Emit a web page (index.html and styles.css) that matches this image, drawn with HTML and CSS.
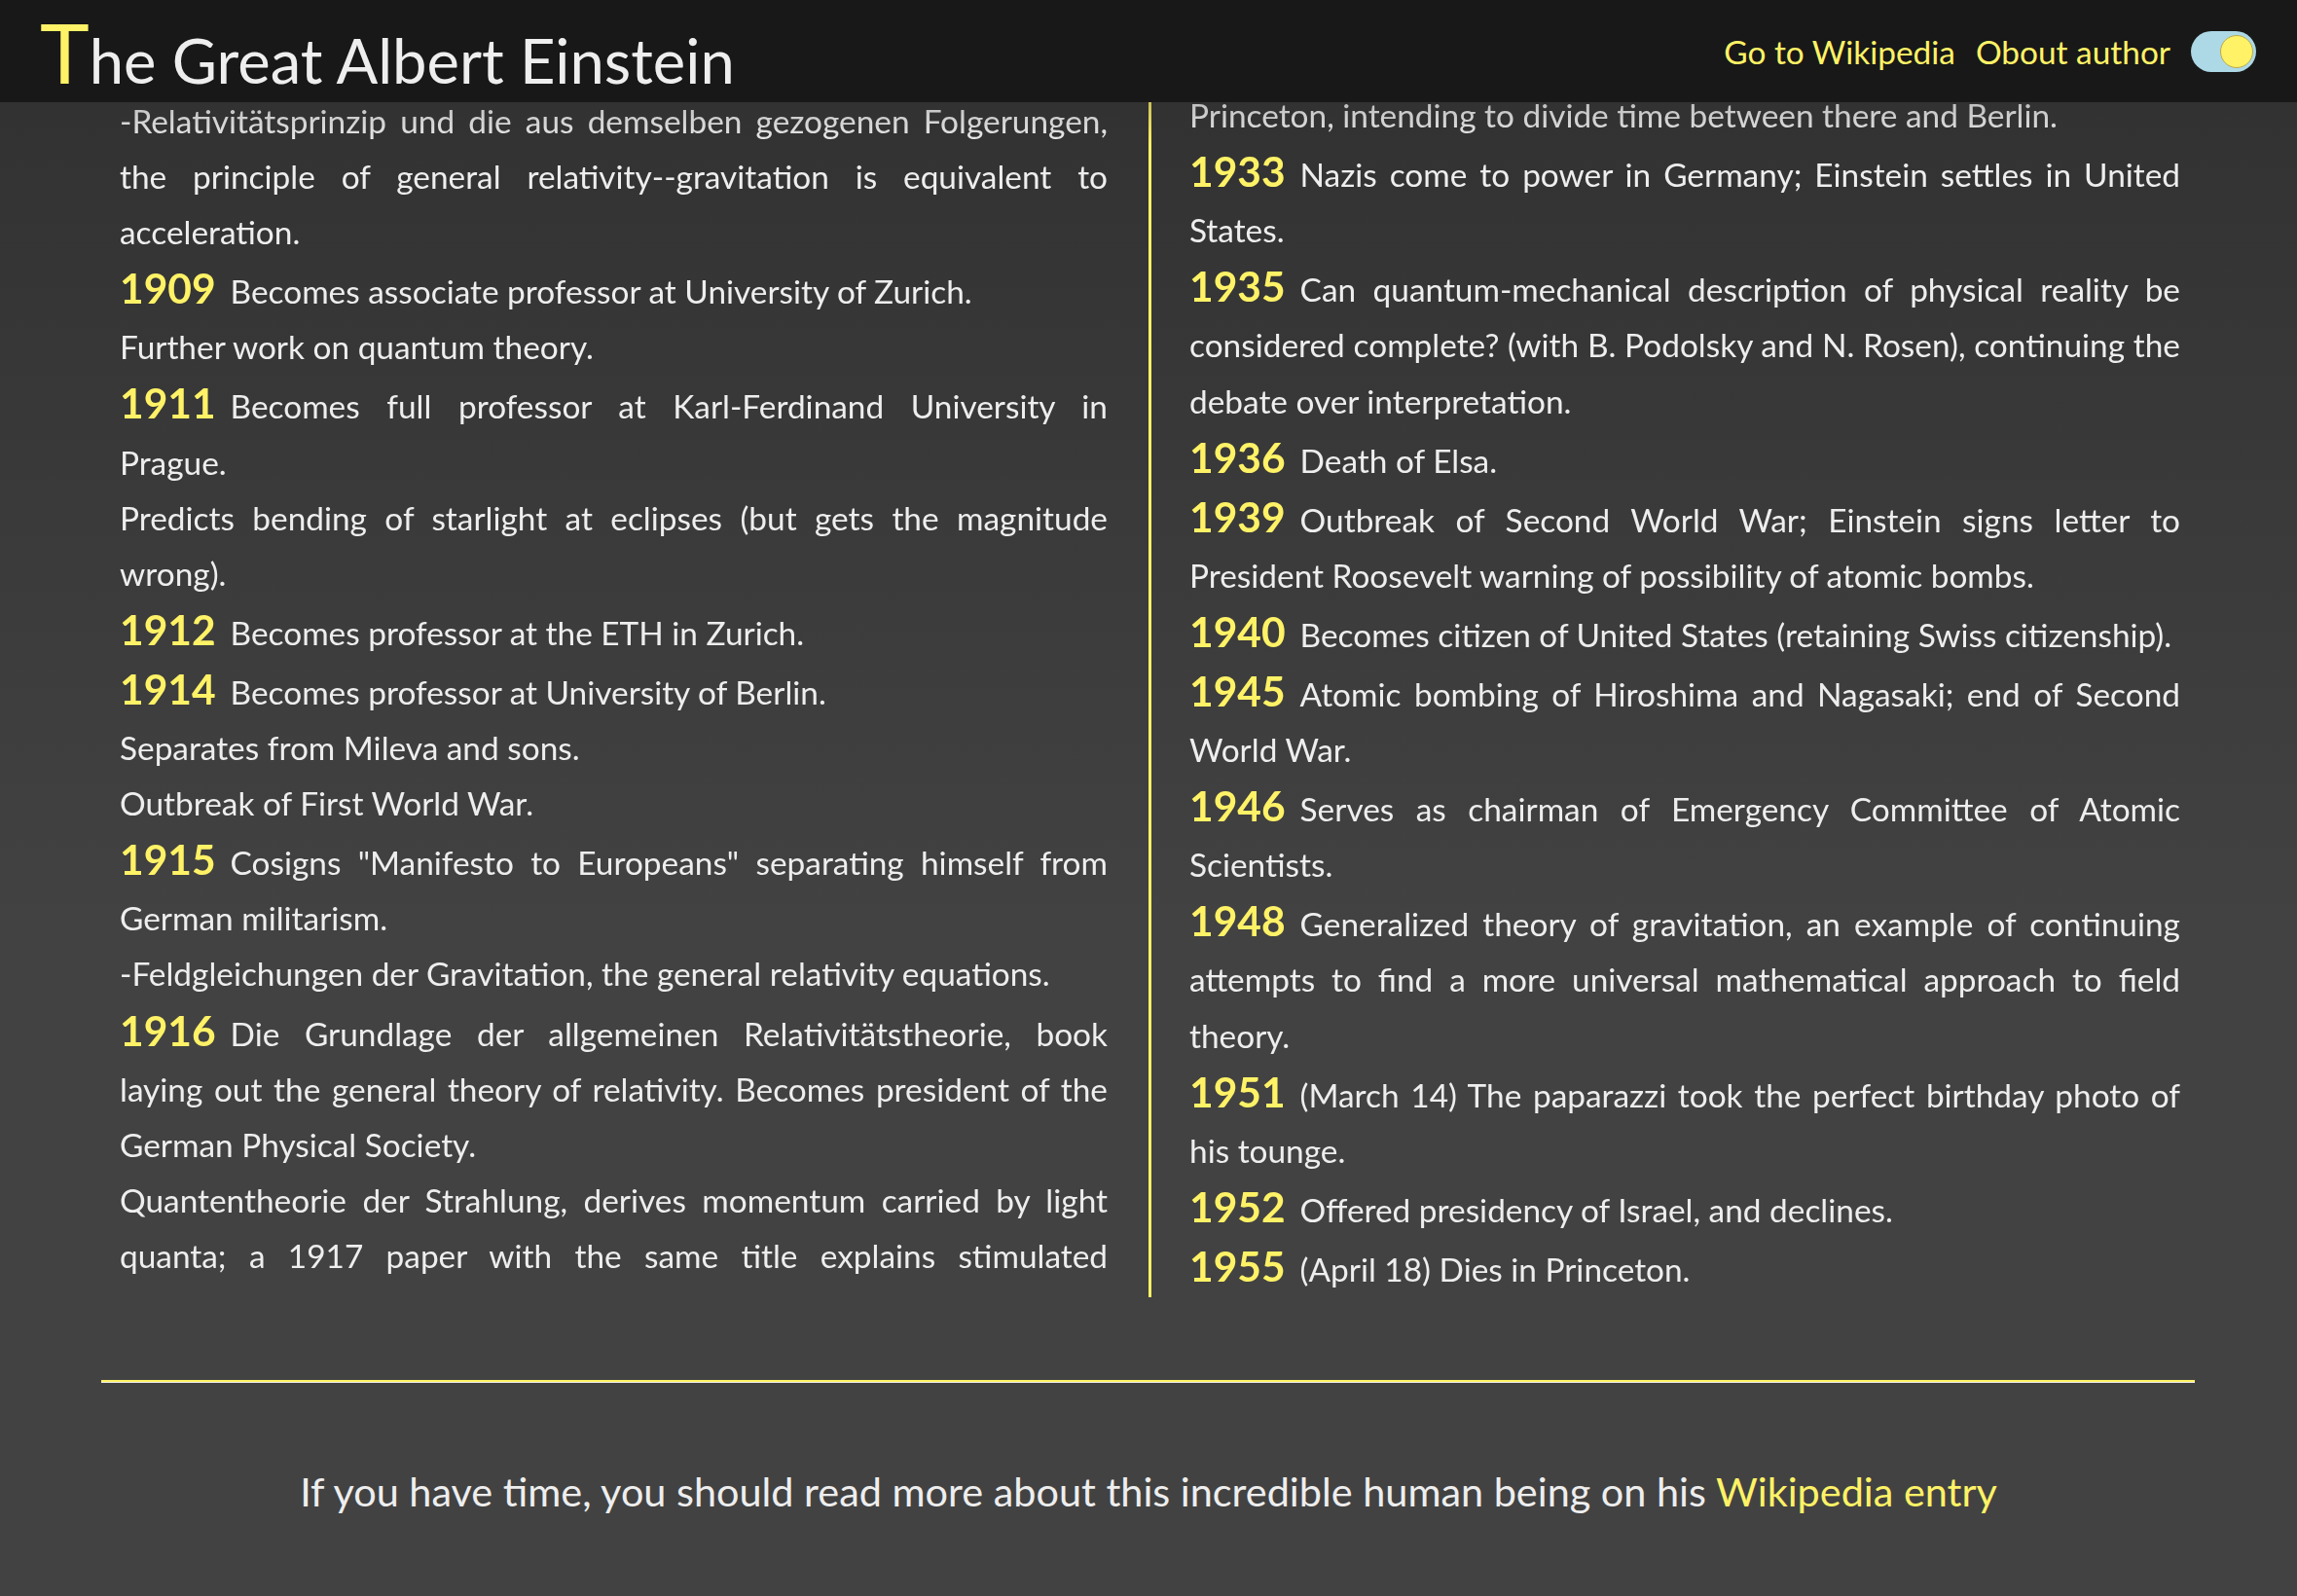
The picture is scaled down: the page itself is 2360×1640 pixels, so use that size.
FILE: index.html
```html
<!DOCTYPE html>
<html lang="en">
<head>
<meta charset="utf-8">
<title>The Great Albert Einstein</title>
<link rel="stylesheet" href="styles.css">
</head>
<body>
<header class="header">
  <h1 class="title"><span class="first">T</span>he Great Albert Einstein</h1>
  <nav class="nav">
    <a href="#">Go to Wikipedia</a>
    <a href="#">Obout author</a>
    <span class="toggle"><span class="knob"></span></span>
  </nav>
</header>
<main class="timeline">
  <section class="col col-left">
    <div class="left-inner">
      <p>-Relativitätsprinzip und die aus demselben gezogenen Folgerungen, the principle of general relativity--gravitation is equivalent to acceleration.</p>
      <p><span class="year">1909</span>Becomes associate professor at University of Zurich.</p>
      <p>Further work on quantum theory.</p>
      <p><span class="year">1911</span>Becomes full professor at Karl-Ferdinand University in Prague.</p>
      <p>Predicts bending of starlight at eclipses (but gets the magnitude wrong).</p>
      <p><span class="year">1912</span>Becomes professor at the ETH in Zurich.</p>
      <p><span class="year">1914</span>Becomes professor at University of Berlin.</p>
      <p>Separates from Mileva and sons.</p>
      <p>Outbreak of First World War.</p>
      <p><span class="year">1915</span>Cosigns "Manifesto to Europeans" separating himself from German militarism.</p>
      <p>-Feldgleichungen der Gravitation, the general relativity equations.</p>
      <p><span class="year">1916</span>Die Grundlage der allgemeinen Relativitätstheorie, book laying out the general theory of relativity. Becomes president of the German Physical Society.</p>
      <p>Quantentheorie der Strahlung, derives momentum carried by light quanta; a 1917 paper with the same title explains stimulated emission, the basis of the laser.</p>
      <p><span class="year">1917</span>Cosmological Considerations in the General Theory of Relativity.</p>
    </div>
  </section>
  <section class="col col-right">
    <p>Princeton, intending to divide time between there and Berlin.</p>
    <p><span class="year">1933</span>Nazis come to power in Germany; Einstein settles in United States.</p>
    <p><span class="year">1935</span>Can quantum-mechanical description of physical reality be considered complete? (with B. Podolsky and N. Rosen), continuing the debate over interpretation.</p>
    <p><span class="year">1936</span>Death of Elsa.</p>
    <p><span class="year">1939</span>Outbreak of Second World War; Einstein signs letter to President Roosevelt warning of possibility of atomic bombs.</p>
    <p><span class="year">1940</span>Becomes citizen of United States (retaining Swiss citizenship).</p>
    <p><span class="year">1945</span>Atomic bombing of Hiroshima and Nagasaki; end of Second World War.</p>
    <p><span class="year">1946</span>Serves as chairman of Emergency Committee of Atomic Scientists.</p>
    <p><span class="year">1948</span>Generalized theory of gravitation, an example of continuing attempts to find a more universal mathematical approach to field theory.</p>
    <p><span class="year">1951</span>(March 14) The paparazzi took the perfect birthday photo of his tounge.</p>
    <p><span class="year">1952</span>Offered presidency of Israel, and declines.</p>
    <p><span class="year">1955</span>(April 18) Dies in Princeton.</p>
  </section>
</main>
<hr class="rule">
<footer class="footer">
  <p>If you have time, you should read more about this incredible human being on his <a href="#">Wikipedia entry</a></p>
</footer>
</body>
</html>
```

FILE: styles.css
```css
* { box-sizing: border-box; }

html, body { margin: 0; }

body {
  font-family: Lato, "Open Sans", sans-serif;
  color: #eeeeee;
  background: #424242 linear-gradient(to bottom, #181818 0, #181818 105px, #323232 105px, #424242 950px) no-repeat;
  min-height: 1640px;
}

.header {
  height: 105px;
  background: #181818;
  display: flex;
  align-items: center;
  justify-content: space-between;
  padding: 0 42px 0 41px;
}

.title {
  margin: 0;
  font-size: 63.3px;
  font-weight: 400;
  line-height: 1;
  color: #eeeeee;
}

.title .first {
  color: #fff266;
  font-size: 86px;
}

.nav {
  display: flex;
  align-items: center;
  gap: 21px;
}

.nav a {
  color: #fff266;
  text-decoration: none;
  font-size: 33.4px;
}

.toggle {
  width: 67px;
  height: 42px;
  border-radius: 21px;
  background: #add8e6;
  display: flex;
  align-items: center;
  justify-content: flex-end;
  padding: 0 3px;
}

.knob {
  width: 34px;
  height: 34px;
  border-radius: 50%;
  background: #fff266;
  border: 1px solid #b9ab4f;
}

.timeline {
  display: flex;
  height: 1228px;
  margin: 0 105px 0 104px;
}

.col {
  overflow: hidden;
  font-size: 33.4px;
  line-height: 57.1px;
  text-align: justify;
  -webkit-mask-image: linear-gradient(to bottom, rgba(0,0,0,0.75) 0, #000 45px);
  mask-image: linear-gradient(to bottom, rgba(0,0,0,0.75) 0, #000 45px);
}

.col p { margin: 0; }

.col-left {
  flex: 0 0 1079px;
  padding: 0 42px 0 19px;
  border-right: 3px solid #fff266;
}

.left-inner { margin-top: -9px; }

.col-right {
  flex: 1 1 auto;
  min-width: 0;
  padding: 0 15px 0 39px;
  display: flex;
  flex-direction: column;
  justify-content: flex-end;
}

.year {
  font-size: 42.5px;
  font-weight: 700;
  color: #fff266;
  margin-right: 15px;
}

.rule {
  margin: 85px 105px 0 104px;
  height: 0;
  border: 0;
  border-top: 2px solid #fff266;
  border-bottom: 1px solid #eeeeee;
}

.footer {
  text-align: center;
  font-size: 41.4px;
  padding-top: 86px;
}

.footer p { margin: 0; }

.footer a {
  color: #fff266;
  text-decoration: none;
}
```
